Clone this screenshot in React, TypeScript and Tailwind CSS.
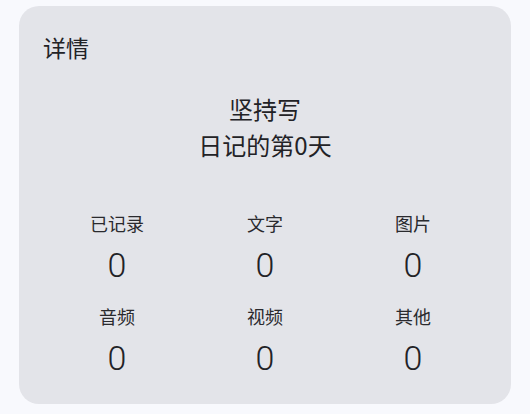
const stats = [
  { label: "已记录", value: 0 },
  { label: "文字", value: 0 },
  { label: "图片", value: 0 },
  { label: "音频", value: 0 },
  { label: "视频", value: 0 },
  { label: "其他", value: 0 },
];

const App = () => {
  return (
    <div className="min-h-[414px] w-[530px] bg-[#f8f9fd] pt-[6px] pl-[19px] font-['Noto_Sans_CJK_SC',sans-serif] text-[#222226]">
      <div className="w-[492px] h-[398px] rounded-[20px] bg-[#e3e4e9] px-6 pt-[25px]">
        <h2 className="text-[23px] leading-8">详情</h2>

        <div className="mt-[28px] text-center text-[24px] leading-9">
          <p>坚持写</p>
          <p>日记的第0天</p>
        </div>

        <div className="mt-[47px] grid grid-cols-3 gap-y-[18px]">
          {stats.map((s) => (
            <div key={s.label} className="flex flex-col items-center gap-[9px]">
              <span className="text-[18px] leading-[26px] text-[#2a2a2e]">{s.label}</span>
              <span className="font-['Roboto',sans-serif] text-[34px] leading-10 font-light">{s.value}</span>
            </div>
          ))}
        </div>
      </div>
    </div>
  );
};

export default App;
